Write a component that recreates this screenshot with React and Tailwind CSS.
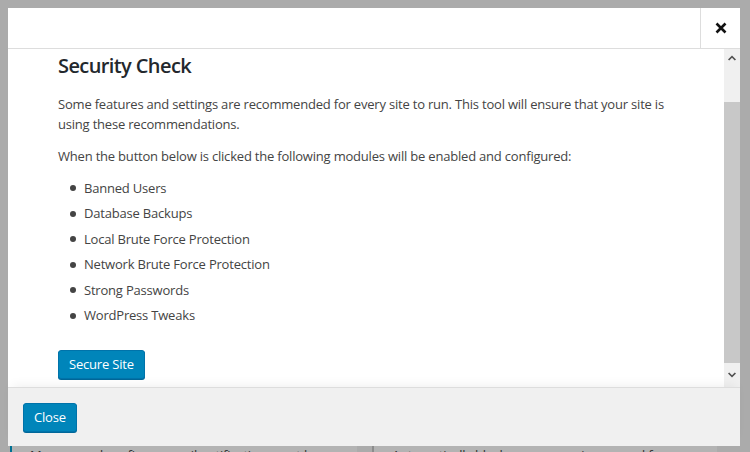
import React from "react";

const font = { fontFamily: '"Open Sans", "Noto Sans", Arial, sans-serif' };

function Chevron({ up }) {
  return (
    <svg width="8" height="6" viewBox="0 0 8 6">
      {up ? (
        <path d="M0 4.5 L4 0.5 L8 4.5 L6.8 5.6 L4 2.8 L1.2 5.6 Z" fill="#505050" />
      ) : (
        <path d="M0 1.5 L4 5.5 L8 1.5 L6.8 0.4 L4 3.2 L1.2 0.4 Z" fill="#505050" />
      )}
    </svg>
  );
}

const items = [
  "Banned Users",
  "Database Backups",
  "Local Brute Force Protection",
  "Network Brute Force Protection",
  "Strong Passwords",
  "WordPress Tweaks",
];

export default function App() {
  return (
    <div className="relative w-[750px] h-[452px] overflow-hidden bg-[#ababab]" style={font}>
      {/* underlying page (dimmed) */}
      <div className="pt-[446px] flex text-[13px] text-[#303030] leading-[19px] tracking-[-0.2px]">
        <div className="ml-[10px] w-[347px] h-[20px] bg-[#b3b3b3] border-l-[2px] border-[#007093] pl-[18px] whitespace-nowrap overflow-hidden">
          Manage and configure email notifications sent by
        </div>
        <div className="ml-[15px] w-[345px] h-[20px] bg-[#b3b3b3] border-l-[2px] border-[#8c8c8c] pl-[18px] whitespace-nowrap overflow-hidden">
          Automatically block users snooping around for
        </div>
      </div>

      {/* modal */}
      <div className="absolute left-[8px] top-[8px] w-[732px] h-[438px] bg-white flex flex-col">
        <div className="h-[41px] flex justify-end border-b border-[#dddddd] shrink-0">
          <div className="w-[40px] h-[40px] border-l border-[#dddddd] flex items-center justify-center">
            <svg width="12" height="12" viewBox="0 0 12 12">
              <path d="M1.5 1.5 L10.5 10.5 M10.5 1.5 L1.5 10.5" stroke="#111" strokeWidth="2.6" />
            </svg>
          </div>
        </div>
        <div className="flex flex-1 min-h-0 relative">
          <div className="flex-1 pl-[50px] pr-[20px] text-[13px] leading-[19.5px] text-[#444444] tracking-[-0.2px]">
            <h2 className="text-[20px] leading-[26px] font-semibold text-[#23282d] mt-[4px] tracking-[-0.6px]">Security Check</h2>
            <p className="mt-[16px]">
              Some features and settings are recommended for every site to run. This tool will ensure that your site is
              <br />
              using these recommendations.
            </p>
            <p className="mt-[13px]">When the button below is clicked the following modules will be enabled and configured:</p>
            <ul className="mt-[12px] pl-[12px]">
              {items.map((t) => (
                <li key={t} className="flex items-center mb-[6px]">
                  <span className="w-[6px] h-[6px] rounded-full bg-[#444444] mr-[8px]" />
                  {t}
                </li>
              ))}
            </ul>
            <button className="mt-[18px] h-[29px] px-[10px] rounded-[3px] bg-[#0085ba] border border-[#0073aa] shadow-[0_1px_0_#006799] text-white text-[13px] leading-[26px]">
              Secure Site
            </button>
          </div>
          <div className="w-[16px] bg-[#f0f0f0] flex flex-col items-center shrink-0">
            <div className="h-[17px] flex items-center justify-center pt-[1px]">
              <Chevron up />
            </div>
            <div className="h-[36px]" />
            <div className="w-full h-[261px] bg-[#c8c8c8]" />
            <div className="flex-1 flex items-center justify-center">
              <Chevron />
            </div>
          </div>
        </div>
        <div className="h-[59px] shrink-0 bg-[#f0f0f0] border-t border-[#dddddd] shadow-[0_-6px_10px_-4px_rgba(0,0,0,0.06)] flex items-center pl-[15px] relative">
          <button className="h-[29px] px-[10px] rounded-[3px] bg-[#0085ba] border border-[#0073aa] shadow-[0_1px_0_#006799] text-white text-[13px] leading-[26px] tracking-[-0.2px]">
            Close
          </button>
        </div>
      </div>
    </div>
  );
}
